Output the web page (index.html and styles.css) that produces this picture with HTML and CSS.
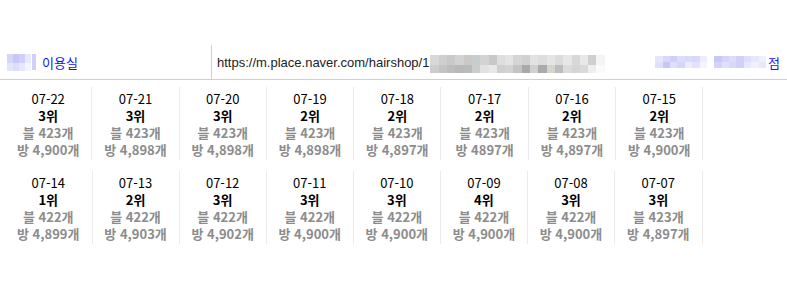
FILE: index.html
```html
<!DOCTYPE html>
<html lang="ko">
<head>
<meta charset="utf-8">
<link rel="stylesheet" href="styles.css">
</head>
<body>
<div class="header">
  <div class="name">
    <span class="blur blur-name">
      <i style="background:#d6d6fb"></i><i style="background:#c8c8f8"></i><i style="background:#cfcff9"></i><i style="background:#e8e8fd"></i>
      <i style="background:#e4e4fc"></i><i style="background:#dcdcfb"></i><i style="background:#e6e6fc"></i><i style="background:#f4f4fe"></i>
    </span>
    <span class="bar-mark"></span><a class="link">이용실</a>
  </div>
  <div class="url">
    <span class="url-text">https://m.place.naver.com/hairshop/1</span>
    <span class="blur blur-url">
      <i style="background:#d8d8d8"></i><i style="background:#cfcfcf"></i><i style="background:#c9c9c9"></i><i style="background:#d2d2d2"></i><i style="background:#cbc9c6"></i><i style="background:#c7cccc"></i><i style="background:#d3d3d3"></i><i style="background:#c8c8c8"></i><i style="background:#dedede"></i><i style="background:#e4e4e4"></i><i style="background:#d5d5d5"></i><i style="background:#d0cfd4"></i><i style="background:#e2e2e2"></i><i style="background:#dddddd"></i><i style="background:#e5e5e5"></i><i style="background:#dcdcdc"></i><i style="background:#e7e7e7"></i><i style="background:#d6d9d9"></i><i style="background:#e8e8e8"></i><i style="background:#cfcfcf"></i><i style="background:#f4f4f4"></i>
      <i style="background:#cdcdcd"></i><i style="background:#c4c4c4"></i><i style="background:#bdbdbd"></i><i style="background:#b8b8b8"></i><i style="background:#b9bcbc"></i><i style="background:#cccccc"></i><i style="background:#e2e2e2"></i><i style="background:#e8e8e8"></i><i style="background:#cfcfcf"></i><i style="background:#d4d2d6"></i><i style="background:#c4c4c4"></i><i style="background:#a9a9a9"></i><i style="background:#d0d0d0"></i><i style="background:#aaaaaa"></i><i style="background:#d6d4cf"></i><i style="background:#bdbdbd"></i><i style="background:#dcdcdc"></i><i style="background:#d4d6d6"></i><i style="background:#d9d9d9"></i><i style="background:#eeeeee"></i><i style="background:#fafafa"></i>
    </span>
    <span class="spacer"></span>
    <span class="blur blur-right">
      <i style="background:#e6e6fc"></i><i style="background:#d8d8fa"></i><i style="background:#cfcff9"></i><i style="background:#dcdcfb"></i><i style="background:#d6dcfb"></i><i style="background:#d8d8fa"></i><i style="background:#ececfd"></i><i style="background:#ffffff"></i><i style="background:#c8c8f8"></i><i style="background:#d6d2fa"></i><i style="background:#dcdcfb"></i><i style="background:#d0d0f9"></i><i style="background:#e0dcfb"></i><i style="background:#e6e6fc"></i><i style="background:#f0f0fe"></i>
      <i style="background:#e0e0fc"></i><i style="background:#c6c6f8"></i><i style="background:#e0e0fc"></i><i style="background:#d6d6fa"></i><i style="background:#ececfd"></i><i style="background:#e2e2fc"></i><i style="background:#f4f4fe"></i><i style="background:#ffffff"></i><i style="background:#d4d4fa"></i><i style="background:#e0e0fc"></i><i style="background:#d8d8fa"></i><i style="background:#d0d0f9"></i><i style="background:#e8e8fc"></i><i style="background:#f0f0fd"></i><i style="background:#e8e8fc"></i>
    </span><a class="link">점</a>
  </div>
</div>

<div class="rows">
  <div class="row">
    <div class="cell"><div class="date">07-22</div><div class="rank">3위</div><div class="cnt">블 423개</div><div class="cnt">방 4,900개</div></div>
    <div class="cell"><div class="date">07-21</div><div class="rank">3위</div><div class="cnt">블 423개</div><div class="cnt">방 4,898개</div></div>
    <div class="cell"><div class="date">07-20</div><div class="rank">3위</div><div class="cnt">블 423개</div><div class="cnt">방 4,898개</div></div>
    <div class="cell"><div class="date">07-19</div><div class="rank">2위</div><div class="cnt">블 423개</div><div class="cnt">방 4,898개</div></div>
    <div class="cell"><div class="date">07-18</div><div class="rank">2위</div><div class="cnt">블 423개</div><div class="cnt">방 4,897개</div></div>
    <div class="cell"><div class="date">07-17</div><div class="rank">2위</div><div class="cnt">블 423개</div><div class="cnt">방 4897개</div></div>
    <div class="cell"><div class="date">07-16</div><div class="rank">2위</div><div class="cnt">블 423개</div><div class="cnt">방 4,897개</div></div>
    <div class="cell"><div class="date">07-15</div><div class="rank">2위</div><div class="cnt">블 423개</div><div class="cnt">방 4,900개</div></div>
  </div>
  <div class="row row-wide">
    <div class="cell"><div class="date">07-14</div><div class="rank">1위</div><div class="cnt">블 422개</div><div class="cnt">방 4,899개</div></div>
    <div class="cell"><div class="date">07-13</div><div class="rank">2위</div><div class="cnt">블 422개</div><div class="cnt">방 4,903개</div></div>
    <div class="cell"><div class="date">07-12</div><div class="rank">3위</div><div class="cnt">블 422개</div><div class="cnt">방 4,902개</div></div>
    <div class="cell"><div class="date">07-11</div><div class="rank">3위</div><div class="cnt">블 422개</div><div class="cnt">방 4,900개</div></div>
    <div class="cell"><div class="date">07-10</div><div class="rank">3위</div><div class="cnt">블 422개</div><div class="cnt">방 4,900개</div></div>
    <div class="cell"><div class="date">07-09</div><div class="rank">4위</div><div class="cnt">블 422개</div><div class="cnt">방 4,900개</div></div>
    <div class="cell"><div class="date">07-08</div><div class="rank">3위</div><div class="cnt">블 422개</div><div class="cnt">방 4,900개</div></div>
    <div class="cell"><div class="date">07-07</div><div class="rank">3위</div><div class="cnt">블 423개</div><div class="cnt">방 4,897개</div></div>
  </div>
</div>
</body>
</html>
```

FILE: styles.css
```css
* { box-sizing: border-box; }
html, body { margin: 0; padding: 0; background: #fff; }
body {
  font-family: "Noto Sans CJK KR", "Noto Sans", sans-serif;
  font-size: 13px;
  color: #000;
}
.header {
  margin-top: 45px;
  display: flex;
  height: 35px;
  border-bottom: 1px solid #cfcfcf;
}
.name {
  width: 212px;
  padding-left: 7px;
  border-right: 1px solid #cfcfcf;
  display: flex;
  align-items: center;
  height: 34px;
}
.link {
  color: #1414f0;
  font-size: 13px;
  line-height: 17px;
}
.blur { display: grid; }
.blur i { display: block; }
.blur-name {
  grid-template-columns: repeat(4, 6px);
  grid-template-rows: 9px 8px;
  margin-right: 1px;
}
.bar-mark {
  width: 4px;
  height: 16px;
  background: #cfcffa;
  margin-right: 6px;
}
.url {
  flex: 1;
  display: flex;
  align-items: center;
  padding-left: 5px;
  height: 34px;
}
.url-text {
  font-family: "Liberation Sans", Arial, sans-serif;
  font-size: 13px;
  color: #222;
}
.blur-url {
  margin-left: 1px;
  grid-template-columns: repeat(21, 8.3px);
  grid-template-rows: 10px 8px;
  margin-top: 4px;
}
.spacer { flex: 1; }
.blur-right {
  grid-template-columns: repeat(15, 7.4px);
  grid-template-rows: 6px 6px;
  margin-right: 2px;
}
.header .url > .link { margin-right: 7px; }
.rows {
  padding: 7px 0 0 5px;
  display: flex;
  flex-direction: column;
  gap: 11px;
}
.row { display: flex; }
.cell {
  width: 87.3px;
  border-right: 1px solid #ebebeb;
  padding: 3px 0 2px;
  text-align: center;
  line-height: 17px;
}
.row-wide .cell { width: 87.1px; }
.row-wide .cell:first-child { width: 87.5px; }
.row-wide .cell:last-child { width: 87.5px; }
.date { color: #000; }
.rank { font-weight: bold; color: #000; }
.cnt { font-weight: bold; color: #8c8c8c; }
```
